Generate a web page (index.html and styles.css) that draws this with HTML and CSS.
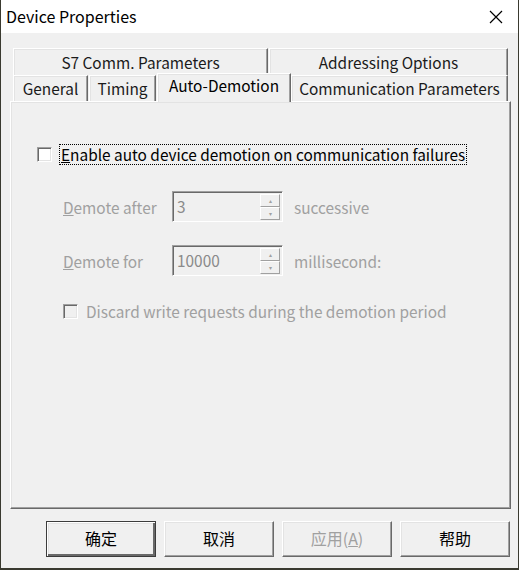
FILE: index.html
```html
<!DOCTYPE html>
<html lang="zh-CN">
<head>
    <meta charset="UTF-8">
    <title>Device Properties</title>
    <link rel="stylesheet" href="styles.css">
</head>
<body>

    <div class="janela">
        <div class="titulo">
            <span class="titulo-texto">Device Properties</span>
            <svg class="fechar" width="14" height="14" viewBox="0 0 14 14">
                <path d="M1 1 L13 13 M13 1 L1 13" stroke="#000" stroke-width="1.2" fill="none"/>
            </svg>
        </div>

        <div class="corpo">
            <div class="abas">
                <div class="linha-abas linha-tras">
                    <div class="aba aba-s7">S7 Comm. Parameters</div>
                    <div class="aba aba-addr">Addressing Options</div>
                </div>
                <div class="linha-abas linha-frente">
                    <div class="aba aba-general">General</div>
                    <div class="aba aba-timing">Timing</div>
                    <div class="aba aba-auto ativa">Auto-Demotion</div>
                    <div class="aba aba-comm">Communication Parameters</div>
                </div>
            </div>

            <div class="painel">
                <label class="opcao principal">
                    <span class="caixa"></span>
                    <span class="foco"><u>E</u>nable auto device demotion on communication failures</span>
                </label>

                <div class="campo">
                    <span class="rotulo"><u>D</u>emote after</span>
                    <div class="spin">
                        <span class="valor">3</span>
                        <div class="setas">
                            <span class="seta">&#9652;</span>
                            <span class="seta">&#9662;</span>
                        </div>
                    </div>
                    <span class="unidade">successive</span>
                </div>

                <div class="campo">
                    <span class="rotulo"><u>D</u>emote for</span>
                    <div class="spin">
                        <span class="valor">10000</span>
                        <div class="setas">
                            <span class="seta">&#9652;</span>
                            <span class="seta">&#9662;</span>
                        </div>
                    </div>
                    <span class="unidade">millisecond:</span>
                </div>

                <label class="opcao desativada">
                    <span class="caixa"></span>
                    <span>Discard write requests during the demotion period</span>
                </label>
            </div>

            <div class="botoes">
                <button class="botao padrao">确定</button>
                <button class="botao">取消</button>
                <button class="botao" disabled>应用(<u>A</u>)</button>
                <button class="botao">帮助</button>
            </div>
        </div>
    </div>

</body>
</html>
```

FILE: styles.css
```css
body {
    margin: 0;
    padding: 0;
    background: #3a3a30;
    font-family: "Noto Sans CJK SC", "Noto Sans", sans-serif;
    color: #000;
}

.janela {
    width: 517px;
    height: 568px;
    margin-left: 1px;
    background: #f0f0f0;
    display: flex;
    flex-direction: column;
    overflow: hidden;
}

.titulo {
    height: 33px;
    background: #fff;
    display: flex;
    align-items: center;
    justify-content: space-between;
    padding: 0 15px 0 5px;
}

.titulo-texto {
    font-size: 16px;
    margin-top: -2px;
}

.fechar {
    display: block;
}

.corpo {
    flex: 1;
    padding: 15px 7px 0 9px;
}

/* abas */
.abas {
    padding-left: 3px;
}

.linha-abas {
    display: flex;
    font-size: 15.4px;
    color: #1a1a1a;
}

.linha-tras {
    height: 27px;
}

.linha-frente {
    height: 26px;
    align-items: flex-end;
}

.aba {
    box-sizing: border-box;
    background: #f0f0f0;
    border-top: 1px solid #fff;
    border-left: 1px solid #fff;
    border-right: 1px solid #696969;
    box-shadow: inset -1px 0 #a0a0a0, inset 1px 1px #e3e3e3;
    text-align: center;
    padding-top: 2px;
    line-height: 22px;
    white-space: nowrap;
}

.linha-tras .aba {
    height: 27px;
}

.linha-frente .aba {
    height: 26px;
    padding-top: 1px;
}

.aba-s7 { width: 255px; }
.aba-addr { width: 239px; margin-left: 1px; }
.aba-general { width: 75px; }
.aba-timing { width: 67px; margin-left: 1px; }
.aba-comm { width: 217px; }

.aba.ativa {
    width: 134px;
    height: 29px;
    margin-bottom: -1px;
    margin-left: 1px;
    position: relative;
    padding-top: 0;
    line-height: 22px;
    color: #000;
}

/* painel */
.painel {
    box-sizing: border-box;
    width: 501px;
    height: 408px;
    border-top: 1px solid #fff;
    border-left: 1px solid #fff;
    border-right: 1px solid #696969;
    border-bottom: 1px solid #696969;
    box-shadow: inset -1px -1px #a0a0a0, inset 1px 1px #e3e3e3;
    padding: 43px 0 0 26px;
    font-size: 15.4px;
}

.opcao {
    display: flex;
    align-items: center;
}

.caixa {
    box-sizing: border-box;
    width: 15px;
    height: 15px;
    background: #fff;
    border-top: 1px solid #a0a0a0;
    border-left: 1px solid #a0a0a0;
    border-right: 1px solid #fff;
    border-bottom: 1px solid #fff;
    box-shadow: inset 1px 1px #696969, inset -1px -1px #e3e3e3;
    margin-right: 8px;
}

.foco {
    outline: 1px dotted #000;
    outline-offset: 0;
    padding: 0 1px;
    line-height: 19px;
}

.campo {
    display: flex;
    align-items: center;
    margin-left: 26px;
    color: #a0a0a0;
}

.principal {
    margin-bottom: 27px;
}

.campo + .campo {
    margin-top: 23px;
}

.rotulo {
    width: 109px;
}

.spin {
    box-sizing: border-box;
    width: 111px;
    height: 31px;
    display: flex;
    border-top: 1px solid #a0a0a0;
    border-left: 1px solid #a0a0a0;
    border-right: 1px solid #fff;
    border-bottom: 1px solid #fff;
    box-shadow: inset 1px 1px #696969;
}

.valor {
    flex: 1;
    padding: 2px 0 0 4px;
    color: #8a8a8a;
    line-height: 24px;
}

.setas {
    width: 20px;
    display: flex;
    flex-direction: column;
    padding: 2px 2px 2px 0;
}

.seta {
    flex: 1;
    box-sizing: border-box;
    border-top: 1px solid #fff;
    border-left: 1px solid #fff;
    border-right: 1px solid #a0a0a0;
    border-bottom: 1px solid #a0a0a0;
    font-size: 6px;
    line-height: 11px;
    text-align: center;
    color: #a0a0a0;
}

.unidade {
    margin-left: 11px;
}

.desativada {
    margin: 24px 0 0 26px;
    color: #a0a0a0;
}

.desativada .caixa {
    background: #f0f0f0;
}

/* botoes */
.botoes {
    display: flex;
    justify-content: flex-end;
    gap: 8px;
    padding-right: 1px;
    margin-top: 12px;
}

.botao {
    box-sizing: border-box;
    width: 110px;
    height: 36px;
    background: #f0f0f0;
    font-family: "Noto Sans CJK SC", sans-serif;
    font-size: 16px;
    color: #000;
    border-top: 1px solid #fff;
    border-left: 1px solid #fff;
    border-right: 1px solid #696969;
    border-bottom: 1px solid #696969;
    box-shadow: inset -1px -1px #a0a0a0, inset 1px 1px #e3e3e3;
    padding: 0 0 3px 0;
}

.botao.padrao {
    border: 1px solid #3c3c3c;
    box-shadow: inset 1px 1px #fff, inset -2px -2px #696969, inset 2px 2px #e3e3e3;
}

.botao:disabled {
    color: #a0a0a0;
}

.botao u {
    text-decoration-color: #a0a0a0;
}
```
